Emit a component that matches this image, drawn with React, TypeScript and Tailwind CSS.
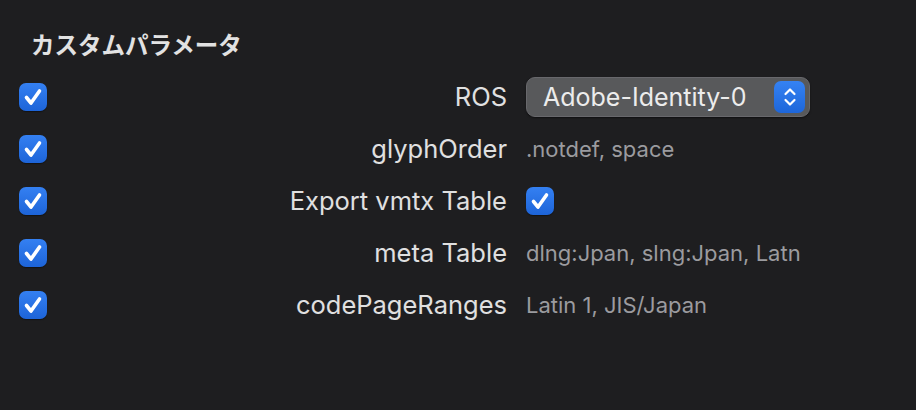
import React from 'react';

// Checked macOS-style checkbox
const CheckBox = () => (
  <div className="w-[28px] h-[28px] rounded-[7px] bg-gradient-to-b from-[#3480f2] to-[#1d64d8] flex items-center justify-center shadow-[0_1px_1px_rgba(0,0,0,0.4)]">
    <svg width="28" height="28" viewBox="0 0 28 28" fill="none">
      <path
        d="M7.5 14.5 L12 20 L20.5 8"
        stroke="white"
        strokeWidth="3.6"
        strokeLinecap="round"
        strokeLinejoin="round"
      />
    </svg>
  </div>
);

// Pop-up button with the blue up/down stepper on the right
const PopUp = ({ value }: { value: string }) => (
  <div className="w-[284px] h-[40px] rounded-[9px] bg-[#58595b] border border-[#68686c] shadow-[0_1px_2px_rgba(0,0,0,0.5)] flex items-center justify-between pl-[16px] pr-[4px]">
    <span className="text-[25px] text-[#ececec] leading-none">{value}</span>
    <div className="w-[31px] h-[32px] rounded-[7px] bg-gradient-to-b from-[#3582f3] to-[#1d66da] flex items-center justify-center">
      <svg width="16" height="22" viewBox="0 0 16 22" fill="none">
        <path d="M3.5 8 L8 3.5 L12.5 8" stroke="white" strokeWidth="2.2" strokeLinecap="round" strokeLinejoin="round" />
        <path d="M3.5 14 L8 18.5 L12.5 14" stroke="white" strokeWidth="2.2" strokeLinecap="round" strokeLinejoin="round" />
      </svg>
    </div>
  </div>
);

const Value = ({ children }: { children: React.ReactNode }) => (
  <span className="text-[22px] text-[#9b9b9f]">{children}</span>
);

const rows: { label: string; value: React.ReactNode }[] = [
  { label: 'ROS', value: <PopUp value="Adobe-Identity-0" /> },
  { label: 'glyphOrder', value: <Value>.notdef, space</Value> },
  { label: 'Export vmtx Table', value: <CheckBox /> },
  { label: 'meta Table', value: <Value>dlng:Jpan, slng:Jpan, Latn</Value> },
  { label: 'codePageRanges', value: <Value>Latin 1, JIS/Japan</Value> },
];

export default function App() {
  return (
    <div
      className="w-[916px] h-[410px] bg-[#1e1e20] overflow-hidden"
      style={{ fontFamily: 'Inter, "Noto Sans CJK JP", sans-serif' }}
    >
      <h2 className="pt-[32px] pl-[31px] h-[60px] leading-[28px] text-[23.5px] font-bold text-[#e2e2e2]">
        カスタムパラメータ
      </h2>
      <div className="mt-[11px] flex flex-col">
        {rows.map((row) => (
          <div key={row.label} className="h-[52px] flex items-center pl-[19px]">
            <CheckBox />
            <span className="w-[460px] text-right text-[25.5px] text-[#e0e0e0]">{row.label}</span>
            <div className="ml-[19px] flex items-center">{row.value}</div>
          </div>
        ))}
      </div>
    </div>
  );
}
